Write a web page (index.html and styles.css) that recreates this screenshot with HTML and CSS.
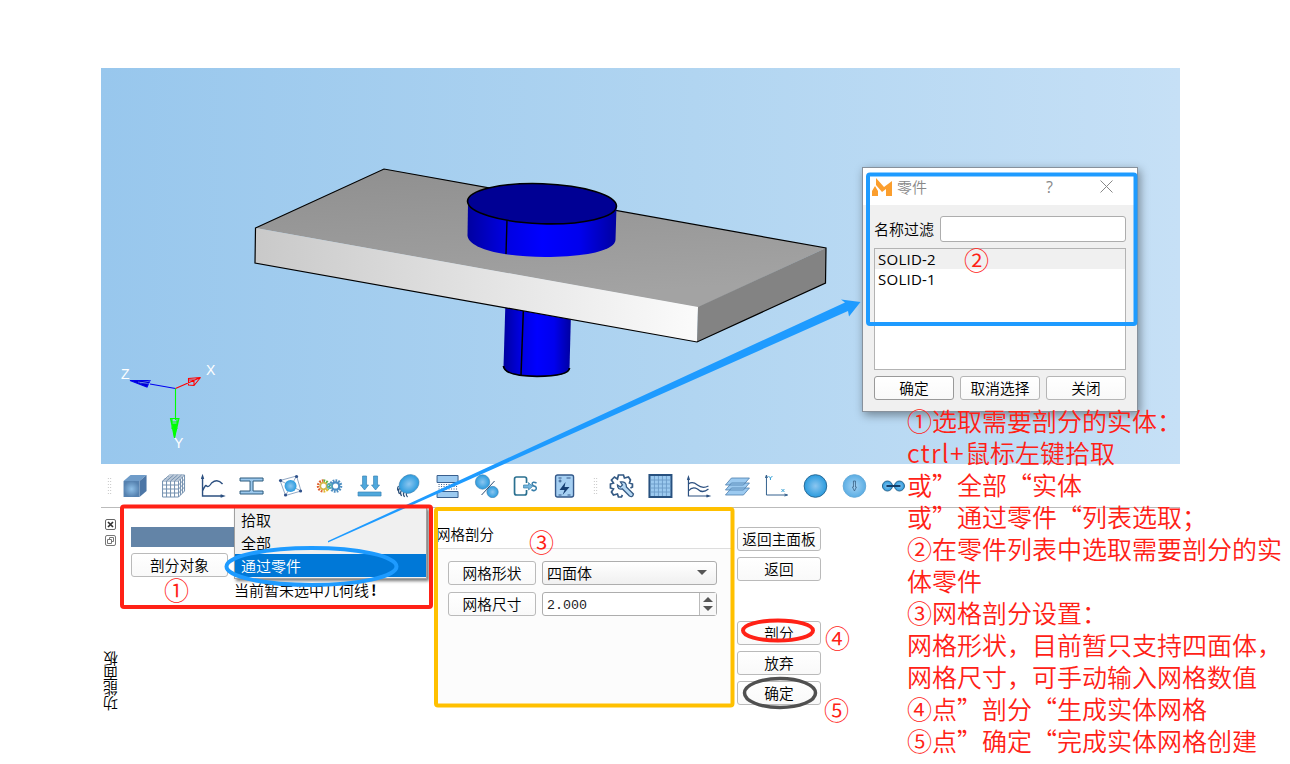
FILE: index.html
```html
<!DOCTYPE html>
<html lang="zh-CN">
<head>
<meta charset="utf-8">
<title>网格剖分</title>
<link rel="stylesheet" href="styles.css">
</head>
<body>
<svg class="defs" width="0" height="0">
  <defs>
    <radialGradient id="ball"><stop offset="0" stop-color="#8cc6f0"/><stop offset="1" stop-color="#2a9bde"/></radialGradient>
    <radialGradient id="ballLight"><stop offset="0" stop-color="#a4d2f4"/><stop offset="1" stop-color="#5baee4"/></radialGradient>
    <radialGradient id="cubeFill"><stop offset="0" stop-color="#8fc0e8"/><stop offset="1" stop-color="#5682b0"/></radialGradient>
    <linearGradient id="front" x1="0" x2="1"><stop offset="0" stop-color="#c9c9c9"/><stop offset="1" stop-color="#fbfbfb"/></linearGradient>
    <linearGradient id="top" x1="0" x2="0.3" y1="0" y2="1"><stop offset="0" stop-color="#8f8f8f"/><stop offset="1" stop-color="#a3a3a3"/></linearGradient>
    <linearGradient id="blue" x1="0" x2="1"><stop offset="0" stop-color="#0000a0"/><stop offset=".25" stop-color="#0000e0"/><stop offset=".5" stop-color="#0000ff"/><stop offset=".75" stop-color="#0000ee"/><stop offset="1" stop-color="#0000a0"/></linearGradient>
  </defs>
</svg>
<main class="app">
  <section class="viewport">
    <svg class="scene" viewBox="101 68 1079 396" width="1079" height="396">
      <path d="M505.500 300L503.500 367Q504 376 537 376.500Q569 376 569.500 369L571 312Z" fill="url(#blue)"/>
      <path d="M503.500 366Q504 376 537 376.300Q569 376 569.500 368" fill="none" stroke="#000" stroke-width="1.800"/>
      <path d="M523.500 306L521 375" stroke="#000" stroke-width="1.500"/>
      <path d="M384 169L826 248L698 307.500L255.500 228Z" fill="url(#top)"/>
      <path d="M255.500 228L698 307L697 342L255 263Z" fill="url(#front)"/>
      <path d="M698 307L826 248L825.500 283L697 342Z" fill="#838383"/>
      <path d="M255.500 228L384 169L826 248L825.500 283L697 342L255 263Z" fill="none" stroke="#000" stroke-width="1.200"/>
      <path d="M468 203L467.500 236C470 250 507 257 545 257C580 257 614 252 615.500 240L616.500 206Z" fill="url(#blue)"/>
      <path d="M507 220L506 254" stroke="#000" stroke-width="1.400"/>
      <ellipse cx="542" cy="203.700" rx="74.500" ry="20" transform="rotate(2 542 203.700)" fill="#000094" stroke="#000" stroke-width="1.600"/>
      <g fill="none" stroke-width="1.100">
        <path d="M175.500 388.500L150 384" stroke="#0000f0"/>
        <path d="M130 380.500L150 380.500L147 387Z" stroke="#0000f0" fill="#0000d0"/>
        <path d="M138 382L150 384M140 383L150 381" stroke="#9ac8ee" stroke-width=".5"/>
        <path d="M175.500 388.500L200.500 377.500L188.500 378.500V385L194 385.500L200.500 377.500M188.500 380H194V385" stroke="#f00"/>
        <path d="M175.500 388.500V420" stroke="#0f0"/>
        <path d="M174.500 438L170.500 418.500H179L178 422H171M172 418V429M177 418V429M179 418.500L174.500 438" stroke="#0f0"/>
        <path d="M172.500 424H177L174.500 437Z" fill="#0f0" stroke="#0f0"/>
      </g>
      <g class="axis"><text x="121" y="379">Z</text><text x="206" y="375">X</text><text x="174" y="448">Y</text></g>
    </svg>
  </section>

  <nav class="toolbar">
    <i class="grip"></i>
    <div class="group first">
      <svg viewBox="0 0 24 24"><path d="M1 7L8 1H24L17 7Z" fill="#6f9cc9"/><path d="M17 7L24 1V17L17 23Z" fill="#4c76a6"/><path d="M1 7H17V23H1Z" fill="url(#cubeFill)"/></svg>
      <svg viewBox="0 0 24 24" fill="none" stroke="#7490af"><path d="M1 7H17V23H1ZM1 11H17M1 15H17M1 19H17M5 7V23M9 7V23M13 7V23M1 7L8 1H23V17L17 23M17 7L23 1M5 7L12 1M9 7L16 1M13 7L20 1M3 5H19V21M6 3H21V19M17 11L23 5M17 15L23 9M17 19L23 13"/></svg>
      <svg viewBox="0 0 24 24" fill="none" stroke="#2c5080" stroke-width="1.400"><path d="M2 3V22H23M1 5L2 2L3 5M20 21L23 22L20 23M2 17Q5 10 6 12Q8 14 11 9Q17 4 22 10"/></svg>
      <svg viewBox="0 0 24 24" fill="#9cc9ee" stroke="#2d5b7d"><path d="M.5 4H23.500V7H13.500V17H23.500V20H.500V17H10.500V7H.500Z"/></svg>
      <svg viewBox="0 0 24 24" fill="none" stroke="#93a9c4"><path d="M1.500 6.500L18 2L22.500 17L7 21.500ZM1.500 6.500L22.500 17M18 2L7 21.500"/><circle cx="12" cy="12" r="6" fill="url(#ball)" stroke="none"/><g fill="#30528b" stroke="none"><circle cx="2" cy="6.500" r="1.600"/><circle cx="18" cy="2.500" r="1.600"/><circle cx="22" cy="17" r="1.600"/><circle cx="7" cy="21" r="1.600"/></g></svg>
      <svg viewBox="0 0 24 24" fill="none"><g stroke-width="2.500" stroke-dasharray="1.700 1.100"><path d="M6 6.500A5.500 5.500 0 0 0 6 17.500" stroke="#e0602f"/><path d="M6 6.500A5.500 5.500 0 0 1 10 15.500" stroke="#5db53a"/><path d="M10 15.500A5.500 5.500 0 0 1 6 17.500" stroke="#e0b92a"/><circle cx="18" cy="12" r="5.500" stroke="#4f8fc2"/></g><circle cx="6" cy="12" r="3.300" stroke="#d3b545" stroke-width="1.800"/><circle cx="18" cy="12" r="3.700" stroke="#4a8ec4" stroke-width="2.200"/><circle cx="12" cy="12" r="2.200" stroke="#5bb0b5" stroke-width="1.600"/></svg>
      <svg viewBox="0 0 24 24" fill="#4fa8dc" stroke="#3b84b5" stroke-width=".7"><path d="M5 2H9V11H11L7 16L3 11H5ZM16 2H20V11H22L18 16L14 11H16ZM.500 18H23.500V22H.500Z"/></svg>
      <svg viewBox="0 0 24 24"><path d="M2 12Q0 15 2 17M3 14Q1 17 3 20M5 16Q3 19 5 22M7.500 18Q6 20 8 23M10 19Q9 21 11 23" fill="none" stroke="#284d77" stroke-width="1.200"/><ellipse cx="12.500" cy="10" rx="10.500" ry="8.800" transform="rotate(-35 12.500 10)" fill="url(#ball)" stroke="#4b86b0" stroke-width=".6"/></svg>
      <svg viewBox="0 0 24 24"><path d="M1.500 1.500H22.500V8.500H1.500ZM1.500 17.500H22.500V23.500H1.500Z" fill="#9ccaf0" stroke="#395f8e"/><path d="M3 10.500H22M3 12.500H22M3 15H22" stroke="#395f8e" stroke-dasharray="1 1.500"/></svg>
      <svg viewBox="0 0 24 24"><circle cx="8" cy="8" r="7.200" fill="url(#ball)" stroke="#4380ae" stroke-width=".6"/><circle cx="18" cy="18" r="5.700" fill="url(#ball)" stroke="#4380ae" stroke-width=".6"/><path d="M20 7L7 21" stroke="#264a72"/></svg>
      <svg viewBox="0 0 24 24"><path d="M13 9V5Q13 3 11 3H3Q1 3 1 5V19Q1 21 3 21H11Q13 21 13 19V16" fill="none" stroke="#2a7090" stroke-width="1.700"/><path d="M10 11H15V8.500L19 12.500L15 16V14H10Z" fill="#74b5df" stroke="#387fa8" stroke-width=".7"/><path d="M23 9Q19 7 18.500 10Q19 12 22 12.500Q24 15 21 16.500Q19 17 18 15.500" fill="none" stroke="#397faa" stroke-width="1.500"/></svg>
      <svg viewBox="0 0 24 24"><rect x="3" y="1" width="18" height="22" rx="2" fill="#a5cff2" stroke="#34598a" stroke-width="1.400"/><path d="M13 8L7 16H12L10 21L17 13H12Z" fill="#173f73"/><path d="M6 4H9M6 7H9M7.500 5.500V8.500M14 4H18M6 21H9M15 21H18" stroke="#34598a"/></svg>
    </div>
    <i class="grip second-grip"></i>
    <div class="group second">
      <svg viewBox="0 0 24 24" fill="none" stroke="#355a84" stroke-width="1.700"><path d="M20 22L13 15Q8 16 8 11L11 13L13 11L11 8Q17 7 17 13L24 20Q23 24 20 22Z" fill="#b7d9f4" stroke-width="1.300"/><path d="M13 21L12 23H9L8 20L4 21L2 18L4 15L1 14V10L4 9L2 6L5 3L8 5L9 1H14L15 4L19 3L21 6L20 9L23 10V13L21 14"/></svg>
      <svg viewBox="0 0 24 24"><rect x="1" y="1" width="22" height="22" fill="#9bc9ef" stroke="#28517f" stroke-width="2"/><path d="M2 6H22M2 10H22M2 14H22M2 18H22M6 2V22M10 2V22M14 2V22M18 2V22" stroke="#6c9cc8" stroke-width=".9"/></svg>
      <svg viewBox="0 0 24 24" fill="none" stroke="#2c5080" stroke-width="1.200"><path d="M2 4V22H23M1 6L2 3L3 6M20 21L23 22L20 23M2 10Q6 7 11 11Q16 15 22 12M2 17Q6 12 11 15Q16 20 22 15"/></svg>
      <svg viewBox="0 0 24 24" fill="#9ccaf0" stroke="#4d7eac" stroke-width=".8"><path d="M6 14H24L18 21H0ZM6 9H24L18 16H0ZM6 4H24L18 11H0Z"/></svg>
      <svg viewBox="0 0 24 24" fill="none" stroke="#34618e"><path d="M2 2V21H23M1 4L2 1L3 4M20 20L23 21L20 22"/><path d="M4 2L6 4L8 2M6 4V6M17 15L20 18M20 15L17 18" stroke="#35a0d5"/></svg>
      <svg viewBox="0 0 24 24"><circle cx="12" cy="12" r="11.300" fill="url(#ball)" stroke="#2a6b98"/></svg>
      <svg viewBox="0 0 24 24"><circle cx="12" cy="12" r="11.300" fill="url(#ballLight)" stroke="#66aad9"/><path d="M11 7H13V13H14L12 17L10 13H11Z" fill="none" stroke="#395f83" stroke-width=".8"/></svg>
      <svg viewBox="0 0 24 24"><circle cx="6" cy="12" r="5" fill="url(#ball)" stroke="#29658e"/><circle cx="18" cy="12" r="5" fill="url(#ball)" stroke="#29658e"/><path d="M5 12H19" stroke="#123e69" stroke-width="2"/></svg>
    </div>
  </nav>

  <section class="dock">
    <aside class="strip">
      <svg viewBox="0 0 12 12" fill="none" stroke="#666"><rect x=".5" y=".5" width="10" height="10" rx="1.500"/><path d="M3 3L8 8M8 3L3 8" stroke="#333" stroke-width="1.700"/></svg>
      <svg viewBox="0 0 12 12" fill="none" stroke="#777"><rect x=".5" y=".5" width="10" height="10" rx="1.500"/><path d="M2.500 4.500H6.500V8.500H2.500ZM4.500 4V2.500H8.500V6.500H7"/></svg>
      <span class="dock-title">功能面板</span>
    </aside>
    <div class="pick">
      <div class="pick-bar"></div>
      <button class="btn">剖分对象</button>
      <span class="pick-status">当前暂未选中几何线<b>!</b></span>
    </div>
    <div class="settings">
      <h2>网格剖分</h2>
      <div class="form">
        <button class="btn">网格形状</button>
        <div class="combo">四面体<i class="down"></i></div>
        <button class="btn">网格尺寸</button>
        <div class="spin"><span>2.000</span><b><i class="up"></i><i class="down"></i></b></div>
      </div>
    </div>
    <div class="actions">
      <button class="btn">返回主面板</button>
      <button class="btn">返回</button>
      <button class="btn mesh">剖分</button>
      <button class="btn">放弃</button>
      <button class="btn">确定</button>
    </div>
  </section>
</main>

<ul class="menu"><li>拾取</li><li>全部</li><li class="on">通过零件</li></ul>

<section class="dialog">
  <header>
    <svg width="20" height="18" viewBox="0 0 20 18" fill="#fb9e2d"><path d="M4 0L12 9L20 3V18H14V11L10 14L4 7ZM3 8L6 13V18H0V13Z"/></svg>
    <span>零件</span><em>?</em>
    <svg class="close" width="13" height="13" viewBox="0 0 13 13" stroke="#888"><path d="M.5 .5L12.500 12.500M12.500 .5L.5 12.500"/></svg>
  </header>
  <div class="dialog-body">
    <label><span>名称过滤</span><input type="text"></label>
    <div class="list"><p class="current">SOLID-2</p><p>SOLID-1</p></div>
    <footer><button class="btn ok">确定</button><button class="btn">取消选择</button><button class="btn">关闭</button></footer>
  </div>
</section>

<div class="notes">
  <p>①选取需要剖分的实体：</p>
  <p><span class="key">ctrl+</span>鼠标左键拾取</p>
  <p>或”全部“实体</p>
  <p>或”通过零件“列表选取；</p>
  <p>②在零件列表中选取需要剖分的实</p>
  <p>体零件</p>
  <p>③网格剖分设置：</p>
  <p>网格形状，目前暂只支持四面体，</p>
  <p>网格尺寸，可手动输入网格数值</p>
  <p>④点”剖分“生成实体网格</p>
  <p>⑤点”确定“完成实体网格创建</p>
</div>

<svg class="marks" width="1290" height="764" viewBox="0 0 1290 764" fill="none" stroke-width="4">
  <path d="M328 541L845 302.500L841 299.500L860.500 302L849 316.500L848 311L328 542.500Z" fill="#1e9bff"/>
  <rect x="122" y="506.500" width="309" height="100.500" rx="2" stroke="#ff2116"/>
  <rect x="436" y="509" width="296.500" height="196.500" rx="2" stroke="#ffc000"/>
  <rect x="868" y="174.500" width="267.500" height="149.500" rx="2" stroke="#1e9bff"/>
  <ellipse cx="311.500" cy="566.500" rx="85" ry="18.500" stroke="#1e9bff"/>
  <ellipse cx="778" cy="630.500" rx="35" ry="10" stroke="#ff2116"/>
  <ellipse cx="780" cy="693" rx="35.500" ry="14.500" stroke="#505050" stroke-width="3.500"/>
  <g class="nums"><text x="176.500" y="600">①</text><text x="976.500" y="270">②</text><text x="541.500" y="552">③</text><text x="837.500" y="648">④</text><text x="836.500" y="720">⑤</text></g>
</svg>
</body>
</html>
```
FILE: styles.css
```css
* { box-sizing: border-box; }
body { margin: 0; width: 1290px; height: 764px; overflow: hidden; position: relative; background: #fff; color: #000; font: 15px/20px "Noto Sans CJK SC", sans-serif; font-weight: 350; }
p, h2, ul { margin: 0; padding: 0; list-style: none; font-weight: inherit; font-size: inherit; }
.defs { position: absolute; }
.app { padding: 68px 0 0 101px; }
.viewport { width: 1079px; height: 396px; background: linear-gradient(90deg, #98c7ed, #b1d5f1 55%, #c6e0f6); }
.scene { display: block; }
.axis { fill: #fff; font: 14px "Liberation Sans", sans-serif; }

.toolbar { width: 1079px; height: 44px; border-bottom: 1px solid #bbb; display: flex; align-items: center; padding: 1px 0 0 6px; }
.grip { width: 5px; height: 18px; background: radial-gradient(circle, #bbb 35%, transparent 40%) 0 0 / 2.5px 3px; }
.second-grip { margin: 0 4px 0 8.500px; }
.group { display: flex; }
.group svg { display: block; height: 24px; }
.first { margin-left: 3px; }
.first svg { width: 39.1px; }
.second svg { width: 38.9px; }

.dock { display: flex; height: 210px; }
.strip { width: 20px; padding: 11px 0 0 4px; display: flex; flex-direction: column; }
.strip svg { width: 12px; height: 12px; margin-bottom: 4px; }
.dock-title { writing-mode: vertical-rl; transform: rotate(180deg); font-size: 15px; line-height: 16px; margin: 100px 0 0 -2px; width: 16px; height: 60px; }
.pick { width: 315px; padding: 19px 0 0 10px; display: flex; flex-direction: column; align-items: flex-start; }
.pick-bar { width: 104px; height: 20px; background: #6384a7; margin-bottom: 6px; }
.btn { font: inherit; font-size: 14.7px; color: #000; line-height: 20px; height: 24px; width: 84px; padding: 0 0 1px; border: 1px solid #bababa; border-radius: 3px; background: linear-gradient(#fff, #f9f9f9); white-space: nowrap; }
.pick .btn { width: 97px; }
.pick-status { margin: 3px 0 0 103px; font-size: 15px; }
.pick-status b { margin-left: 2px; }
.settings { width: 296px; padding-top: 16px; }
.settings h2 { font-size: 14.5px; line-height: 20px; padding-bottom: 4px; }
.form { height: 157px; border-top: 1px solid #ddd; background: #fcfcfc; padding: 12px 0 0 12px; display: grid; grid-template-columns: 88px 175px; grid-auto-rows: 24px; gap: 7px 6px; align-content: start; }
.form .btn { width: 88px; }
.combo, .spin { height: 24px; border: 1px solid #adadad; border-radius: 3px; padding-left: 4px; display: flex; justify-content: space-between; align-items: center; }
.combo { background: linear-gradient(#fff, #f0f0f0); line-height: 20px; padding: 0 9px 1px 4px; }
.spin { background: #fff; color: #222; font: 13.3px "Liberation Mono", monospace; }
.spin span { padding-top: 2px; }
.spin b { width: 17px; height: 22px; border-left: 1px solid #bbb; background: #f8f8f8; display: flex; flex-direction: column; align-items: center; justify-content: center; gap: 4px; }
.up, .down { border: 5px solid transparent; }
.up { border-top: 0; border-bottom-color: #555; }
.down { border-bottom: 0; border-top-color: #555; }
.actions { padding: 19px 0 0 5px; display: flex; flex-direction: column; gap: 6px; }
.mesh { margin-top: 34px; }

.menu { position: absolute; left: 234px; top: 507px; width: 193px; height: 72px; border: 1px solid #a0a0a0; border-top: 0; background: #f0f0f0; box-shadow: 2px 2px 3px #0008; padding-top: 2px; }
.menu li { height: 22.5px; line-height: 22px; padding-left: 6px; }
.menu .on { height: 23px; line-height: 23px; background: #0078d7; color: #fff; }

.dialog { position: absolute; left: 862px; top: 167px; width: 276px; height: 245px; border: 1px solid #87919c; background: #f0f0f0; box-shadow: 2px 3px 9px #0006; }
.dialog header { height: 37px; background: #fff; display: flex; align-items: center; padding: 0 0 0 9px; color: #888; }
.dialog header span { margin-left: 5px; }
.dialog em { margin-left: 119px; font: 16px "Open Sans", sans-serif; }
.close { margin-left: 47px; }
.dialog-body { padding: 11px 11px 0; }
.dialog label { display: flex; gap: 6px; align-items: center; height: 26px; }
.dialog label span { width: 60px; white-space: nowrap; }
.dialog input { width: 186px; height: 26px; border: 1px solid #adadad; border-radius: 3px; background: #fff; }
.list { margin-top: 6px; width: 252px; height: 122px; border: 1px solid #b3b3b3; background: #fff; font: 15px/20px "Open Sans", sans-serif; }
.list p { padding-left: 3px; height: 20px; letter-spacing: .25px; }
.current { background: #f0f0f0; }
.dialog footer { display: flex; gap: 6px; margin-top: 6px; }
.dialog footer .btn { width: 80px; border-color: #b5b5b5; }
.dialog footer .ok { border-color: #999; }

.notes { position: absolute; left: 907px; top: 404px; font-size: 25px; line-height: 32px; color: #ff2116; white-space: nowrap; }
.key { display: inline-block; width: 58px; letter-spacing: 1.2px; }
.marks { position: absolute; left: 0; top: 0; }
.nums { fill: #ff2116; stroke: none; font-size: 25px; text-anchor: middle; }
```
